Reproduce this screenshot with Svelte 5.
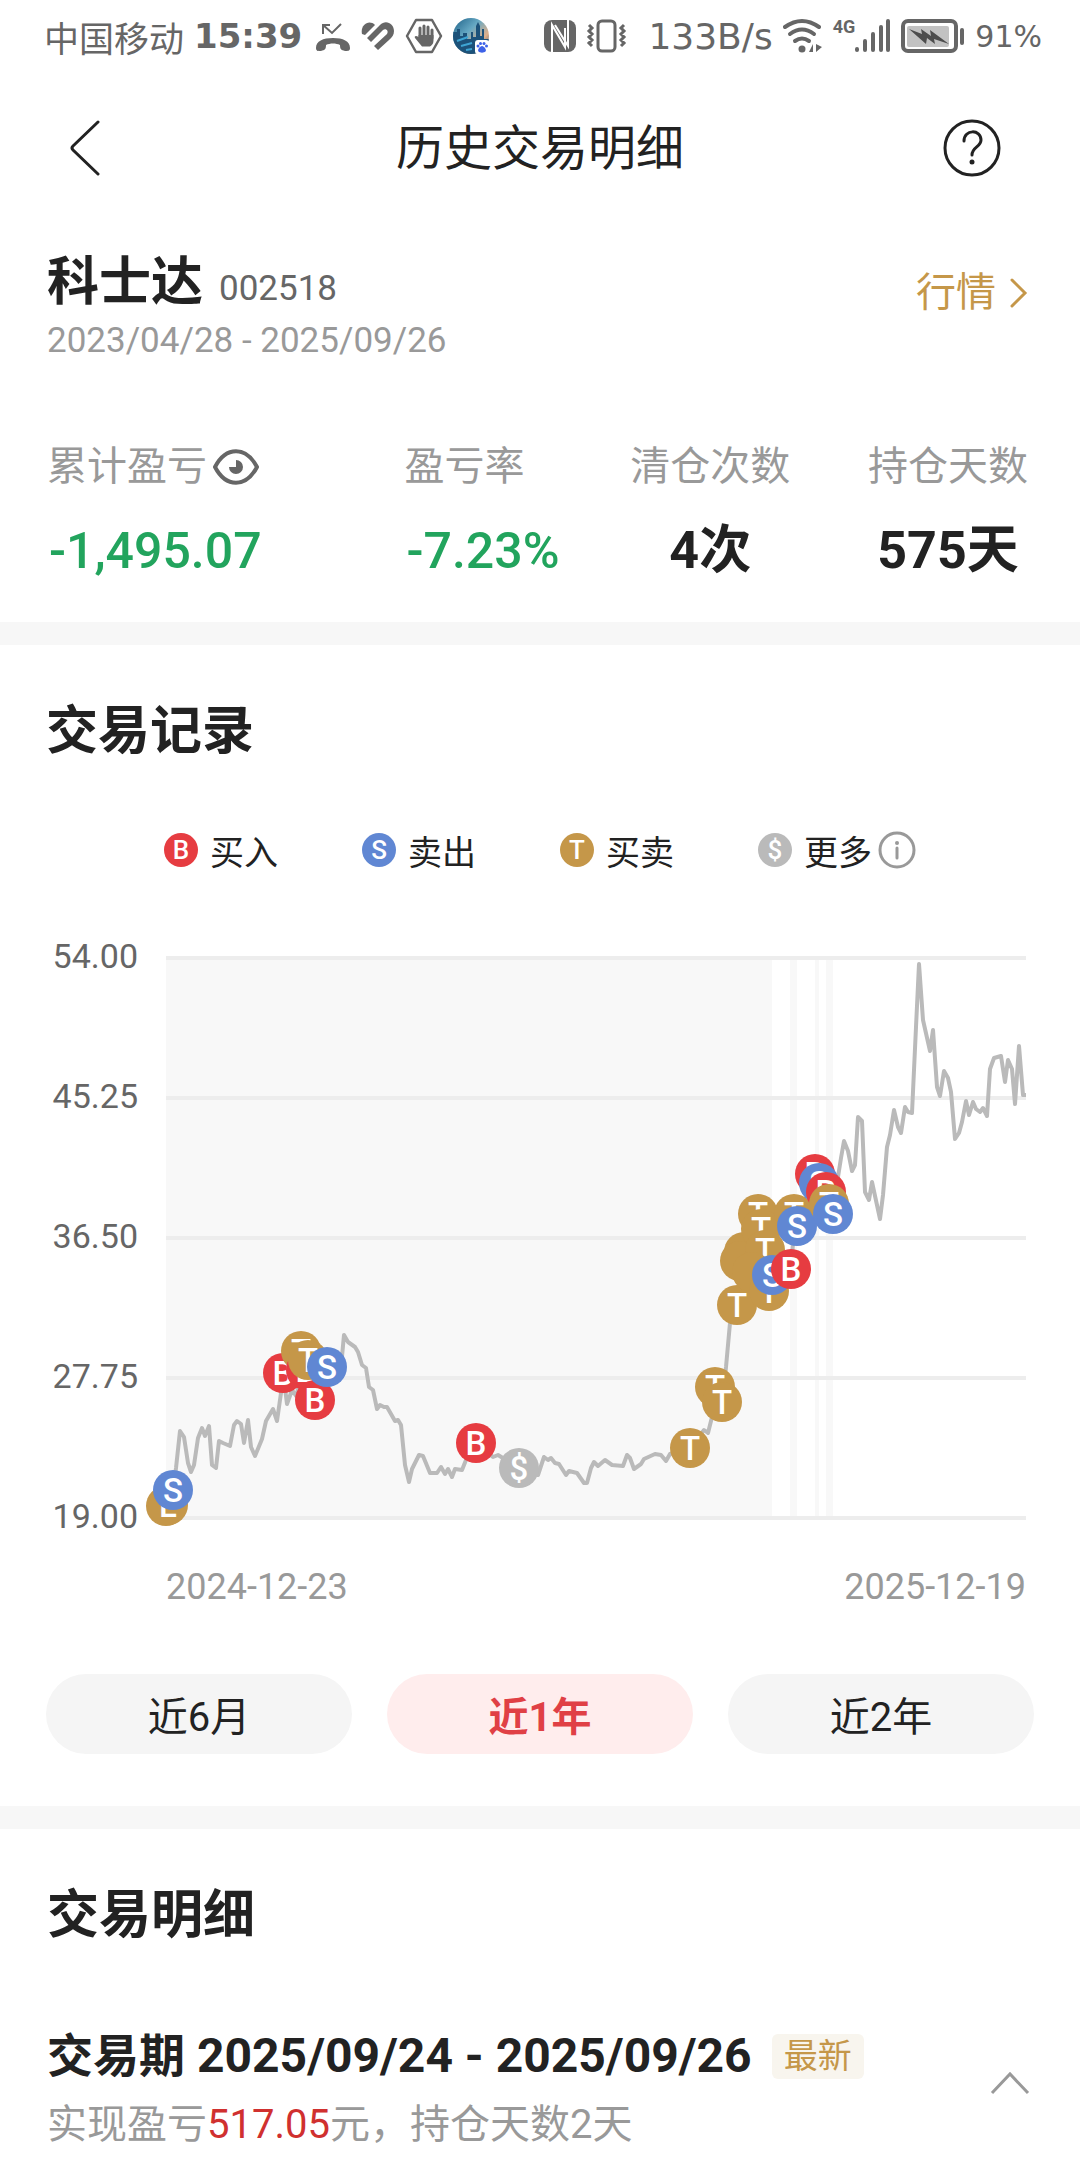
<script lang="ts">
  type Kind = 'B' | 'S' | 'T' | '$';
  type Marker = { x: number; y: number; kind: Kind; label?: string };

  const colors: Record<Kind, string> = {
    B: '#e63c41',
    S: '#6087d3',
    T: '#c59749',
    $: '#bababa'
  };

  const legend: Array<{ kind: Kind; text: string }> = [
    { kind: 'B', text: '买入' },
    { kind: 'S', text: '卖出' },
    { kind: 'T', text: '买卖' },
    { kind: '$', text: '更多' }
  ];

  const stats = [
    { label: '累计盈亏', value: '-1,495.07', down: true, eye: true },
    { label: '盈亏率', value: '-7.23%', down: true },
    { label: '清仓次数', value: '4次' },
    { label: '持仓天数', value: '575天' }
  ];

  const prices = ['54.00', '45.25', '36.50', '27.75', '19.00'];
  const gridY = [2, 142, 282, 422, 562];
  // holding periods as [x, width]
  const holds = [[0, 606], [624, 7], [649, 4], [660, 7]];

  const line = `0,550 7,534 10,512 14,475 18,481 22,507 25,516 28,509 32,482 36,472 39,480 43,470 46,509 50,512
    53,485 57,487 64,490 68,469 71,465 75,468 78,487 82,464 85,491 89,500 96,483 100,465 107,453 111,465
    115,437 118,424 121,448 126,434 131,441 135,395 142,404 149,444 161,411 167,404 175,411 178,379 182,386
    189,391 192,396 196,409 200,412 203,431 207,434 211,453 214,449 218,451 221,451 229,465 232,464 235,469
    239,509 243,526 246,513 253,499 257,500 264,517 271,517 275,511 279,518 282,513 286,521 289,513 296,514
    300,504 310,487 327,501 332,499 353,512 372,519 378,501 382,504 385,502 389,507 393,508 400,519 403,515
    411,517 418,527 421,527 425,512 428,506 432,510 439,504 446,509 457,510 461,499 464,502 468,513 475,508
    478,503 489,498 495,499 500,505 504,498 524,492 538,474 542,477 546,461 556,446 560,411 564,367 571,349
    578,296 592,258 603,335 625,313 627,287 649,218 667,258 672,221 675,202 678,185 682,195 686,215 689,209
    692,161 696,165 699,236 703,244 706,226 714,263 717,239 721,191 724,179 728,154 732,171 735,177 739,151
    742,156 746,157 750,71 753,8 757,64 764,95 767,74 771,131 774,140 778,115 782,122 785,136 789,183
    793,177 796,166 800,145 803,159 807,146 810,153 814,156 817,152 821,160 824,113 828,102 835,100 839,126
    842,104 846,113 849,148 853,90 857,139 860,139`;

  const markers: Marker[] = [
    { x: 0, y: 550, kind: 'T', label: '' },
    { x: 2, y: 549, kind: 'T', label: 'L' },
    { x: 7, y: 534, kind: 'S' },
    { x: 117, y: 417, kind: 'B' },
    { x: 135, y: 395, kind: 'T' },
    { x: 140, y: 414, kind: 'B' },
    { x: 149, y: 444, kind: 'B' },
    { x: 142, y: 404, kind: 'T' },
    { x: 161, y: 411, kind: 'S' },
    { x: 310, y: 487, kind: 'B' },
    { x: 353, y: 512, kind: '$' },
    { x: 524, y: 492, kind: 'T' },
    { x: 549, y: 431, kind: 'T' },
    { x: 556, y: 446, kind: 'T' },
    { x: 571, y: 349, kind: 'T' },
    { x: 578, y: 296, kind: 'T', label: '' },
    { x: 574, y: 305, kind: 'T', label: '' },
    { x: 592, y: 258, kind: 'T' },
    { x: 595, y: 273, kind: 'T' },
    { x: 599, y: 294, kind: 'T' },
    { x: 586, y: 316, kind: 'T', label: '' },
    { x: 603, y: 335, kind: 'T' },
    { x: 606, y: 319, kind: 'S' },
    { x: 625, y: 313, kind: 'B' },
    { x: 628, y: 258, kind: 'T' },
    { x: 631, y: 270, kind: 'S' },
    { x: 649, y: 218, kind: 'B' },
    { x: 653, y: 227, kind: 'S' },
    { x: 660, y: 236, kind: 'B' },
    { x: 663, y: 248, kind: 'T' },
    { x: 667, y: 258, kind: 'S' }
  ];

  const ranges = ['近6月', '近1年', '近2年'];
  let active = $state('近1年');
</script>

<div class="page">
  <div class="status">
    <div class="group left">
      <span class="carrier">中国移动</span>
      <span class="clock">15:39</span>
      <svg width="36" height="36" viewBox="0 0 36 36">
        <path d="M8 16V7H15M8 7L17 15L26 6" fill="none" stroke="#666" stroke-width="2" />
        <path d="M1 30C1 23 8 20 18 20S35 23 35 30C35 33 33 33 30 33C26 32 25 31 25 27C21 25 15 25 11 27C11 31 10 32 6 33C3 33 1 33 1 30Z" fill="#666" />
      </svg>
      <svg width="34" height="36" viewBox="0 0 34 36">
        <path d="M1 16C-1 7 8 1 14 7L4 17Z" fill="#666" />
        <path d="M6 20L19 7C25 1 33 6 33 13C33 17 31 19 28 22L17 32L13 28L26 16C28 13 25 10 22 12L10 24Z" fill="#666" />
      </svg>
      <svg width="38" height="36" viewBox="0 0 38 36">
        <path d="M11 2H27L36 18L27 34H11L2 18Z" fill="none" stroke="#666" stroke-width="2.5" stroke-linejoin="round" />
        <path d="M15 20V10M19 19V8M23 19V9M27 20V12" stroke="#666" stroke-width="3" stroke-linecap="round" />
        <path d="M13.500 17H28.500V22C28.500 26 27 27 25 28.500H17L10 20C9 18 11 17 13.500 19Z" fill="#666" />
      </svg>
      <svg width="36" height="36" viewBox="0 0 36 36">
        <defs>
          <linearGradient id="sky" x1="0" y1="0" x2="1" y2="1">
            <stop offset="0" stop-color="#1d5f86" />
            <stop offset=".4" stop-color="#66a9c4" />
            <stop offset=".7" stop-color="#e0b08a" />
            <stop offset="1" stop-color="#174463" />
          </linearGradient>
          <clipPath id="disc"><circle cx="18" cy="18" r="18" /></clipPath>
        </defs>
        <g clip-path="url(#disc)">
          <rect width="36" height="36" fill="url(#sky)" />
          <path d="M0 14H4V11H7V18H10V15H14V21H18V14H20V19H23V8L25 4L27 8V18H29V11H31V21H36V36H0Z" fill="#1c527a" />
          <path d="M4 23L15 19M8 28L19 25M13 32L19 31" stroke="#3ea5d4" stroke-width="2" />
        </g>
        <rect x="22" y="22" width="14" height="14" rx="3" fill="#fff" />
        <g fill="#3d62e8">
          <circle cx="25" cy="28" r="1.500" /><circle cx="27.500" cy="25.500" r="1.500" />
          <circle cx="31" cy="25.500" r="1.500" /><circle cx="33.500" cy="28" r="1.500" />
          <path d="M29 28C31 28 34 32 32.500 33.500C31 35 27 35 25.500 33.500C24 32 27 28 29 28Z" />
        </g>
      </svg>
    </div>
    <div class="group right">
      <svg width="32" height="36" viewBox="0 0 32 36">
        <rect y="2" width="32" height="32" rx="8" fill="#666" />
        <path d="M8 34V7L21 29V10M11 7L24 28V2" fill="none" stroke="#fff" stroke-width="2" />
      </svg>
      <svg width="42" height="36" viewBox="0 0 42 36" fill="none" stroke="#666">
        <rect x="12" y="3" width="17" height="30" rx="4" stroke-width="3" />
        <path d="M3 7L6 10L3 13L6 16L3 19L6 22L3 25L6 28M38 7L35 10L38 13L35 16L38 19L35 22L38 25L35 28" stroke-width="3" />
      </svg>
      <span class="speed">133B/s</span>
      <svg width="40" height="36" viewBox="0 0 40 36">
        <g fill="none" stroke="#666" stroke-width="4" stroke-linecap="round">
          <path d="M2 9Q19 -3 36 9" /><path d="M7 16Q19 7 31 16" /><path d="M12 23Q19 18 26 23" />
        </g>
        <circle cx="19" cy="31" r="3.500" fill="#666" />
        <path d="M30 26V34H26ZM33 26L39 29L33 34Z" fill="#666" />
      </svg>
      <div class="cell">
        <span class="net">4G</span>
        <svg width="36" height="36" viewBox="0 0 36 36" stroke="#666" stroke-width="4" stroke-linecap="round">
          <path d="M2 31V32M10 23V32M18 16V32M26 9V32M33 3V32" />
        </svg>
      </div>
      <svg width="64" height="36" viewBox="0 0 64 36">
        <rect x="2" y="3" width="53" height="30" rx="5" fill="none" stroke="#666" stroke-width="4" />
        <rect x="6" y="8" width="42" height="21" rx="2" fill="#c2c2c2" />
        <path d="M8 11L21 16L20 11L30 18L29 12L48 26L33 21L34 26L26 20L25 26Z" fill="#4d4d4d" />
        <path d="M61 12V25" stroke="#666" stroke-width="4" stroke-linecap="round" />
      </svg>
      <span class="battery">91%</span>
    </div>
  </div>

  <header class="nav">
    <button class="icon back" aria-label="返回">
      <svg width="30" height="56" viewBox="0 0 30 56"><path d="M28 2L3 26Q1 28 3 30L28 54" fill="none" stroke="#222" stroke-width="3" stroke-linecap="round" /></svg>
    </button>
    <h1>历史交易明细</h1>
    <button class="icon help" aria-label="帮助">
      <svg width="60" height="60" viewBox="0 0 60 60">
        <circle cx="30" cy="30" r="27" fill="none" stroke="#222" stroke-width="3" />
        <path d="M22 23C22 11 39 11 39 22C39 29 30 29 30 37" fill="none" stroke="#222" stroke-width="3" stroke-linecap="round" />
        <circle cx="30" cy="44" r="2.500" fill="#222" />
      </svg>
    </button>
  </header>

  <section class="summary">
    <div class="head">
      <div>
        <div class="name"><strong>科士达</strong><span>002518</span></div>
        <div class="period">2023/04/28 - 2025/09/26</div>
      </div>
      <a class="quote" href="#quote">
        行情
        <svg width="18" height="32" viewBox="0 0 18 32"><path d="M2 3L15 16L2 29" fill="none" stroke="#c59749" stroke-width="3" stroke-linecap="round" /></svg>
      </a>
    </div>
    <div class="stats">
      {#each stats as s}
        <div class="stat" class:down={s.down}>
          <div class="label">
            {s.label}
            {#if s.eye}
              <button class="icon" aria-label="隐藏金额">
                <svg width="46" height="36" viewBox="0 0 46 36">
                  <path d="M2 18C13 -3 33 -3 44 18C33 39 13 39 2 18Z" fill="none" stroke="#666" stroke-width="4" />
                  <path d="M23 11V18H16A7 7 0 1 0 23 11Z" fill="#666" />
                </svg>
              </button>
            {/if}
          </div>
          <div class="value">{s.value}</div>
        </div>
      {/each}
    </div>
  </section>

  <section class="record">
    <h2>交易记录</h2>
    <div class="legend">
      {#each legend as l}
        <div class="entry">
          <span class="dot" style="background: {colors[l.kind]}">{l.kind}</span>
          {l.text}
          {#if l.kind === '$'}
            <button class="icon" aria-label="说明">
              <svg width="38" height="38" viewBox="0 0 38 38">
                <circle cx="19" cy="19" r="17" fill="none" stroke="#999" stroke-width="3" />
                <path d="M19 17V27" stroke="#999" stroke-width="3" stroke-linecap="round" />
                <circle cx="19" cy="12" r="2" fill="#999" />
              </svg>
            </button>
          {/if}
        </div>
      {/each}
    </div>

    <div class="chart">
      <div class="prices">
        {#each prices as p}<span>{p}</span>{/each}
      </div>
      <div class="plot">
        <svg viewBox="0 0 860 564" role="img" aria-label="股价走势">
          {#each holds as [x, w]}
            <rect {x} y="2" width={w} height="560" fill="#f8f8f8" />
          {/each}
          {#each gridY as y}
            <line x1="0" x2="860" y1={y} y2={y} stroke="#ededed" stroke-width="4" />
          {/each}
          <polyline points={line} fill="none" stroke="#bababa" stroke-width="4" stroke-linejoin="round" />
          {#each markers as m}
            <circle cx={m.x} cy={m.y} r="20" fill={colors[m.kind]} />
            {#if m.label !== ''}
              <text x={m.x} y={m.y + 12}>{m.label ?? m.kind}</text>
            {/if}
          {/each}
        </svg>
        <div class="dates"><span>2024-12-23</span><span>2025-12-19</span></div>
      </div>
    </div>

    <div class="ranges">
      {#each ranges as r}
        <button class:active={active === r} onclick={() => (active = r)}>{r}</button>
      {/each}
    </div>
  </section>

  <section class="detail">
    <h2>交易明细</h2>
    <div class="item">
      <div>
        <div class="title"><span class="term">交易期</span> 2025/09/24 - 2025/09/26 <span class="tag">最新</span></div>
        <div class="sub">实现盈亏<em>517.05</em>元，持仓天数2天</div>
      </div>
      <button class="icon fold" aria-label="收起">
        <svg width="40" height="24" viewBox="0 0 40 24"><path d="M2 22L20 3L38 22" fill="none" stroke="#999" stroke-width="3" /></svg>
      </button>
    </div>
  </section>
</div>

<style>
  :global(body) { background: #fff; }
  .page { font-family: Roboto, "Noto Sans CJK SC", sans-serif; color: #222; }
  svg { display: block; flex: none; }
  button { font-family: inherit; border: 0; cursor: pointer; }
  .icon { padding: 0; background: none; }
  h1, h2 { margin: 0; }
  h2 { font-size: 52px; line-height: 64px; font-weight: 700; }

  .status { display: flex; justify-content: space-between; align-items: center; height: 72px; padding: 0 38px 0 44px; color: #666; white-space: nowrap; }
  .group { display: flex; align-items: center; gap: 10px; font-family: "DejaVu Sans", "Noto Sans CJK SC", sans-serif; }
  .carrier { font-size: 35px; }
  .clock { margin-right: 3px; font-size: 34px; font-weight: 700; }
  .speed { margin-left: 10px; font-size: 36px; }
  .battery { font-size: 30px; }
  .cell { display: flex; align-items: flex-start; }
  .net { font: 700 18px/18px Roboto, sans-serif; }

  .nav { display: grid; grid-template-columns: 1fr auto 1fr; align-items: center; height: 152px; padding: 0 78px 0 78px; }
  .back { justify-self: start; margin-left: -8px; }
  .help { justify-self: end; }
  h1 { padding-bottom: 8px; font-size: 48px; font-weight: 400; }

  .summary { padding: 27px 52px 39px 47px; border-bottom: 23px solid #f7f7f7; }
  .head { display: flex; justify-content: space-between; align-items: flex-start; }
  .name { display: flex; align-items: baseline; gap: 16px; height: 64px; line-height: 64px; }
  .name strong { font-size: 52px; }
  .name span { font-size: 35px; color: #666; }
  .period { margin-top: 4px; font-size: 35px; line-height: 44px; color: #999; }
  .quote { display: flex; align-items: center; gap: 14px; margin-top: 12px; font-size: 40px; line-height: 60px; color: #c59749; text-decoration: none; }
  .stats { display: grid; grid-template-columns: 358fr 226fr 238fr 160fr; margin-top: 80px; }
  .stat { width: max-content; text-align: center; }
  .stat.down { text-align: left; }
  .label { display: flex; align-items: center; gap: 6px; font-size: 40px; line-height: 48px; color: #999; }
  .value { margin-top: 28px; font-size: 52px; line-height: 64px; font-weight: 700; }
  .down .value { padding-left: 2px; color: #22a45d; font-size: 50px; font-weight: 500; }

  .record { padding: 55px 46px 52px; border-bottom: 23px solid #f7f7f7; }
  .legend { display: flex; justify-content: center; gap: 84px; margin-top: 66px; }
  .entry { display: flex; align-items: center; height: 40px; font-size: 34px; }
  .entry .icon { margin-left: 6px; }
  .dot { width: 34px; height: 34px; margin-right: 12px; border-radius: 50%; color: #fff; font-size: 26px; line-height: 34px; font-weight: 500; text-align: center; }
  .chart { display: flex; gap: 28px; margin-top: 68px; padding-right: 8px; }
  .prices { display: flex; flex-direction: column; justify-content: space-between; width: 92px; margin-bottom: 73px; text-align: right; font-size: 34px; line-height: 36px; color: #666; }
  .plot { flex: 1; padding-top: 18px; }
  .plot svg { width: 100%; height: auto; overflow: visible; }
  .plot text { fill: #fff; font-size: 33px; font-weight: 500; text-anchor: middle; }
  .dates { display: flex; justify-content: space-between; margin-top: 47px; font-size: 36px; line-height: 40px; color: #999; }
  .ranges { display: flex; gap: 35px; margin-top: 67px; }
  .ranges button { flex: 1; height: 80px; border-radius: 40px; background: #f5f5f5; color: #222; font-size: 40px; }
  .ranges .active { background: #ffeded; color: #e04045; font-weight: 700; }

  .detail { padding: 55px 50px 13px 47px; }
  .item { display: flex; justify-content: space-between; align-items: center; margin-top: 80px; }
  .title { display: flex; align-items: center; gap: 12px; font-size: 48px; line-height: 56px; font-weight: 700; }
  .term { font-size: 46px; }
  .tag { margin-left: 8px; padding: 0 12px; border-radius: 6px; background: #f8f5ee; color: #c59749; font-size: 34px; line-height: 45px; font-weight: 400; }
  .sub { margin-top: 17px; font-size: 40px; line-height: 48px; color: #999; }
  .sub em { color: #d0302f; font-style: normal; }
  .fold { padding-bottom: 12px; }
</style>
